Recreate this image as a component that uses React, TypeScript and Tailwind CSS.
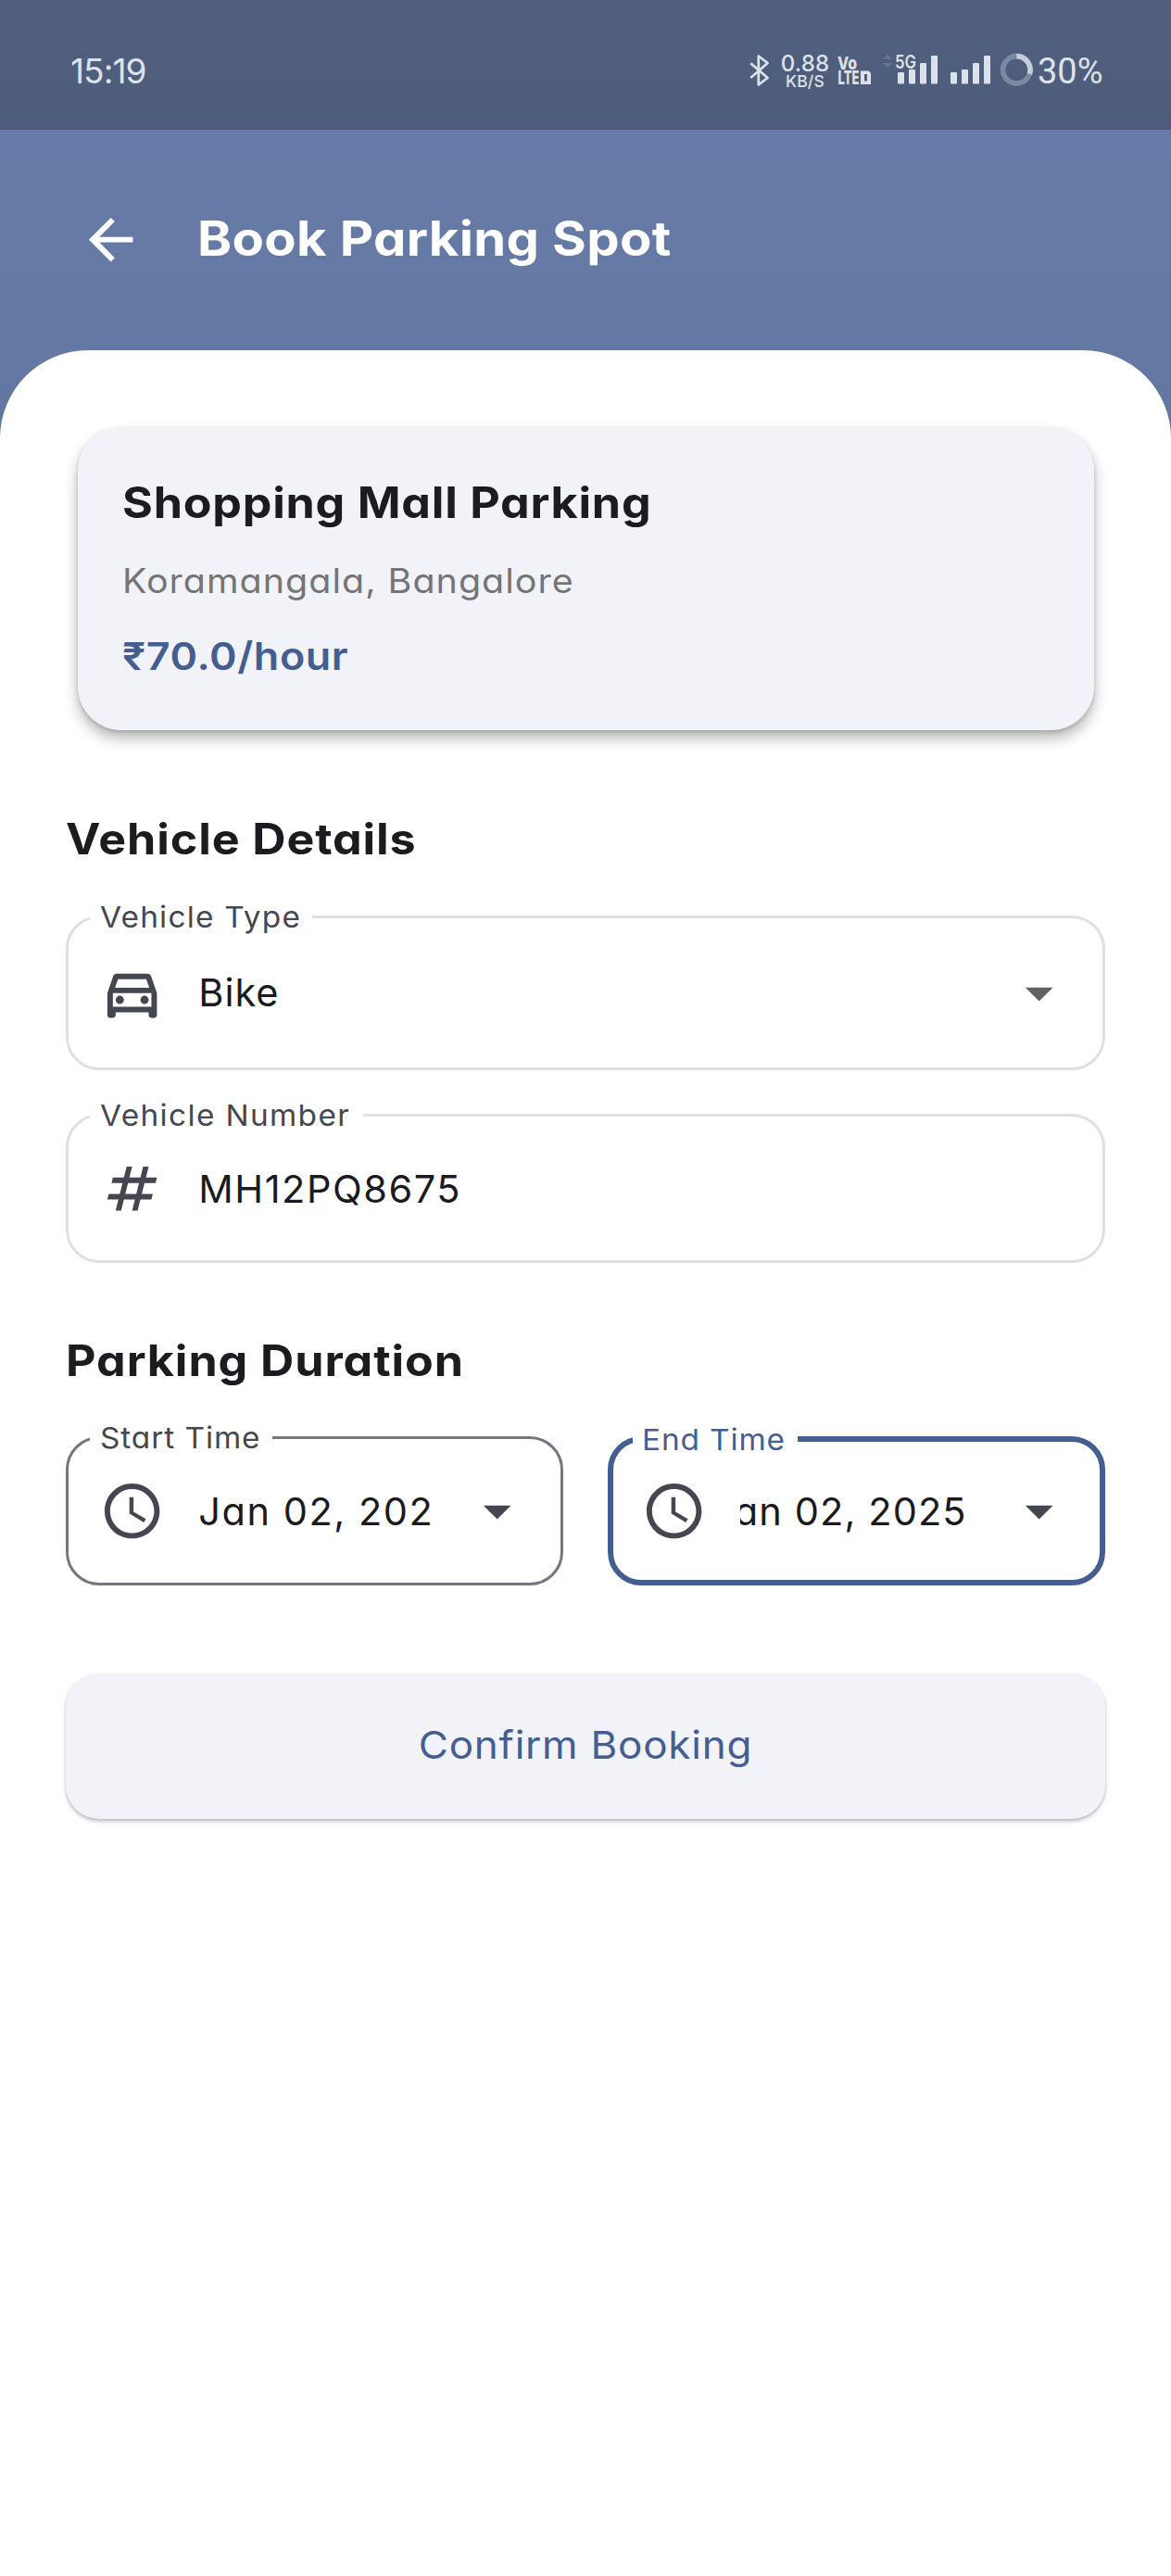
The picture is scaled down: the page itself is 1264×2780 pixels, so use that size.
import type { ReactNode } from "react";

const DATE = "Jan 02, 2025";

function Glyph({ d, className = "" }: { d: string; className?: string }) {
  return (
    <svg viewBox="0 0 24 24" className={`h-[71.3px] w-[71.3px] shrink-0 ${className}`} fill="currentColor">
      <path d={d} />
    </svg>
  );
}

const BACK = "M20 11H7.83l5.59-5.59L12 4l-8 8 8 8 1.41-1.41L7.83 13H20v-2z";
const CAR =
  "M18.92 6.01C18.72 5.42 18.16 5 17.5 5h-11c-.66 0-1.21.42-1.42 1.01L3 12v8c0 .55.45 1 1 1h1c.55 0 1-.45 1-1v-1h12v1c0 .55.45 1 1 1h1c.55 0 1-.45 1-1v-8l-2.08-5.99zM6.85 7h10.29l1.08 3.11H5.77L6.85 7zM19 17H5v-5h14v5zM7.5 13a1.5 1.5 0 1 0 0 3 1.5 1.5 0 0 0 0-3zM16.5 13a1.5 1.5 0 1 0 0 3 1.5 1.5 0 0 0 0-3z";
const HASH =
  "M20.5 10 21 8h-4l1-4h-2l-1 4h-4l1-4h-2L9 8H5l-.5 2h4l-1 4h-4L3 16h4l-1 4h2l1-4h4l-1 4h2l1-4h4l.5-2h-4l1-4h4zm-7 4h-4l1-4h4l-1 4z";
const CLOCK =
  "M11.99 2C6.47 2 2 6.48 2 12s4.47 10 9.99 10C17.52 22 22 17.52 22 12S17.52 2 11.99 2zM12 20c-4.42 0-8-3.58-8-8s3.58-8 8-8 8 3.58 8 8-3.58 8-8 8zm.5-13H11v6l5.25 3.15.75-1.23-4.5-2.67z";
const CARET = "M7 10l5 5 5-5z";

type FieldProps = {
  label: string;
  notchClass: string;
  labelClass: string;
  boxClass: string;
  icon: string;
  caret?: string;
  children: ReactNode;
};

function Field({ label, notchClass, labelClass, boxClass, icon, caret, children }: FieldProps) {
  return (
    <div className={`relative flex items-center gap-9 rounded-[36px] ${boxClass}`}>
      <div className={`absolute h-10 bg-white ${notchClass}`}>
        <span className={`block w-max origin-left scale-x-[1.06] whitespace-pre text-[31.5px] leading-[41px] ${labelClass}`}>
          {label}
        </span>
      </div>
      <Glyph d={icon} className="text-[#44474f]" />
      <div className="flex min-w-0 flex-1 overflow-hidden text-[41.5px] leading-[60px] whitespace-pre text-[#1b1b1f]">
        {children}
      </div>
      {caret && <Glyph d={CARET} className={caret} />}
    </div>
  );
}

function StatusBar() {
  return (
    <div className="flex h-[140px] items-start bg-linear-to-b from-[#50607f] to-[#4c5c79] pr-[70px] pl-[76px] text-[#dde1e9]">
      <span className="mt-[54px] text-[37px] leading-[46px] tracking-[-0.94px]">15:19</span>
      <div className="ml-auto flex items-start">
        <svg className="mt-[58px] h-9 w-[22px]" viewBox="0 0 22 36" fill="none" stroke="currentColor" strokeWidth="2.7">
          <path d="M1.3 10.3 19.6 26l-9.8 7.5V2.5l9.8 7.5L1.3 26" strokeLinejoin="round" />
        </svg>
        <div className="mt-[57px] ml-[11px] flex w-[54px] flex-col items-center font-medium">
          <span className="text-[24px] leading-6 tracking-[0.2px]">0.88</span>
          <span className="text-[17.5px] leading-[14px] tracking-[0.2px]">KB/S</span>
        </div>
        <svg className="mt-[58px] ml-[8px] h-9 w-[37px]" viewBox="0 0 37 36" fill="currentColor" fontWeight="800">
          <text x="0" y="17" fontSize="19" textLength="21" lengthAdjust="spacingAndGlyphs">Vo</text>
          <text x="0.5" y="33" fontSize="20" textLength="23" lengthAdjust="spacingAndGlyphs">LTE</text>
          <path d="M25 18.5h8.6l2.4 2.4V33H25zM29 22v7.5h3V22z" fillRule="evenodd" />
        </svg>
        <svg className="mt-[56px] ml-[11px] h-9 w-[62px]" viewBox="0 0 62 36" fill="currentColor">
          <path d="M1 8l5-5.5L11 8zM1 12l5 5 5-5z" opacity="0.18" />
          <text x="14" y="17.5" fontSize="20" fontWeight="600" textLength="23" lengthAdjust="spacingAndGlyphs">5G</text>
          <rect x="17" y="22" width="7" height="12.5" rx="1" />
          <rect x="29" y="19" width="7" height="15.5" rx="1" />
          <rect x="41" y="12" width="7" height="22.5" rx="1" />
          <rect x="53" y="4" width="7" height="30.5" rx="1" />
        </svg>
        <svg className="mt-[56px] ml-[11px] h-9 w-[46px]" viewBox="0 0 46 36" fill="currentColor">
          <rect x="1" y="22" width="7" height="12.5" rx="1" />
          <rect x="13" y="19" width="7" height="15.5" rx="1" />
          <rect x="25" y="12" width="7" height="22.5" rx="1" />
          <rect x="37" y="4" width="7" height="30.5" rx="1" />
        </svg>
        <svg className="mt-[57px] ml-[8px] h-9 w-9" viewBox="0 0 36 36" fill="none" strokeWidth="5.6">
          <circle cx="18.3" cy="18.3" r="14.7" stroke="#7c89a1" />
          <path d="M18.3 3.6A14.7 14.7 0 0 1 32.3 22.8" stroke="#c6ccd8" />
        </svg>
        <span className="mt-[54px] ml-[5px] w-[74px] font-['Roboto'] text-[38px] leading-[46px] whitespace-pre">30%</span>
      </div>
    </div>
  );
}

export default function App() {
  return (
    <div
      className="flex min-h-[2780px] w-full flex-col bg-[#6378a3] font-['Inter','Liberation_Sans',sans-serif]"
      style={{ fontFeatureSettings: '"cv11"' }}
    >
      <StatusBar />
      <div className="flex flex-1 flex-col bg-linear-to-b from-[#687ba8] from-[0px] to-[#6277a2] to-[330px]">
        <header className="flex h-[238px] items-center gap-[58px] pl-[84px] text-white">
          <Glyph d={BACK} />
          <h1 className="-mt-[2px] origin-left scale-x-[1.08] text-[52px] font-bold tracking-[0.32px] whitespace-pre">
            Book Parking Spot
          </h1>
        </header>
        <main className="flex-1 rounded-t-[95px] bg-white pt-[83px] pr-[71px] pl-[71px]">
          <section className="mx-[12.5px] h-[327px] rounded-[47px] bg-[#f2f3f9] pt-[45px] pl-[48px] whitespace-pre shadow-[0_9px_15px_rgba(0,0,0,0.28),0_2px_4px_rgba(0,0,0,0.14)]">
            <h2 className="w-max origin-left scale-x-[1.08] text-[46.5px] leading-[72px] font-bold tracking-[0.72px] text-[#1d1b20]">
              Shopping Mall Parking
            </h2>
            <p className="mt-[22px] w-max origin-left scale-x-[1.08] text-[36.5px] leading-[54px] tracking-[0.95px] text-[#757575]">
              Koramangala, Bangalore
            </p>
            <p className="mt-6 w-max origin-left scale-x-[1.08] text-[41.5px] leading-[60px] font-semibold tracking-[0.56px] text-[#445e91]">
              ₹70.0/hour
            </p>
          </section>

          <h2 className="mt-[81px] w-max origin-left scale-x-[1.08] text-[46.5px] leading-[72px] font-bold tracking-[0.82px] text-[#1d1b20]">
            Vehicle Details
          </h2>
          <div className="mt-[47px] flex flex-col gap-[47px]">
            <Field
              label="Vehicle Type"
              notchClass="left-[23px] -top-[22px] w-[240px] pl-[11px]"
              labelClass="tracking-[1.12px] text-[#44474f]"
              boxClass="h-[167px] border-3 border-[#e0e0e0] px-[33px]"
              icon={CAR}
              caret="text-[#616161]"
            >
              <span className="-mt-[2px] tracking-[0.98px]">Bike</span>
            </Field>
            <Field
              label="Vehicle Number"
              notchClass="left-[23px] -top-[22px] w-[295px] pl-[11px]"
              labelClass="tracking-[1.27px] text-[#44474f]"
              boxClass="h-[161px] border-3 border-[#e0e0e0] px-[33px]"
              icon={HASH}
            >
              <span className="tracking-[1.53px]">MH12PQ8675</span>
            </Field>
          </div>

          <h2 className="mt-[69px] w-max origin-left scale-x-[1.08] text-[46.5px] leading-[72px] font-bold tracking-[0.86px] text-[#1d1b20]">
            Parking Duration
          </h2>
          <div className="mt-[46px] grid grid-cols-2 gap-12">
            <Field
              label="Start Time"
              notchClass="left-[23px] -top-[22px] w-[197px] pl-[11px]"
              labelClass="tracking-[0.87px] text-[#44474f]"
              boxClass="h-[161px] border-3 border-[#74777f] px-[33px]"
              icon={CLOCK}
              caret="text-[#44474f]"
            >
              <span className="tracking-[1.54px]">{DATE}</span>
            </Field>
            <Field
              label="End Time"
              notchClass="left-[21px] -top-[23px] w-[178px] pl-[10px]"
              labelClass="tracking-[0.81px] text-[#445e91]"
              boxClass="h-[161px] border-6 border-[#445e91] px-[30px]"
              icon={CLOCK}
              caret="text-[#44474f]"
            >
              <span className="-ml-10 flex flex-1 justify-end pr-[6px] tracking-[1.1px]">{DATE}</span>
            </Field>
          </div>

          <button className="mt-[95px] flex h-[157px] w-full items-center justify-center rounded-[36px] bg-[#f2f3f9] pb-[2px] text-[41.5px] text-[#445e91] shadow-[0_3px_4px_rgba(0,0,0,0.2),0_1px_3px_rgba(0,0,0,0.12)]">
            <span className="scale-x-[1.06] tracking-[0.72px]">Confirm Booking</span>
          </button>
        </main>
      </div>
    </div>
  );
}
